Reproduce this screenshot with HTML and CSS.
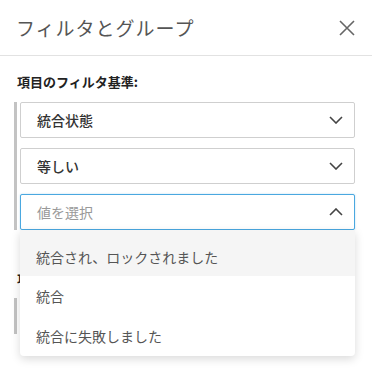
FILE: index.html
```html
<!DOCTYPE html>
<html lang="ja">
<head>
    <meta charset="UTF-8">
    <meta name="viewport" content="width=device-width, initial-scale=1.0">
    <title>フィルタとグループ</title>
    <link rel="stylesheet" href="styles.css">
</head>
<body>
    <div class="panel">
        <div class="panel-header">
            <h1>フィルタとグループ</h1>
            <button class="close-button" aria-label="閉じる">
                <svg width="16" height="16" viewBox="0 0 16 16">
                    <path d="M1 1L15 15M15 1L1 15" stroke="#666" stroke-width="1.6" fill="none"/>
                </svg>
            </button>
        </div>

        <div class="panel-body">
            <div class="section-label">項目のフィルタ基準:</div>
            <div class="filter-group">
                <div class="select">
                    <span class="select-value">統合状態</span>
                    <svg class="chevron" width="14" height="8" viewBox="0 0 14 8"><path d="M1 1L7 7L13 1" stroke="#444" stroke-width="1.6" fill="none"/></svg>
                </div>
                <div class="select">
                    <span class="select-value">等しい</span>
                    <svg class="chevron" width="14" height="8" viewBox="0 0 14 8"><path d="M1 1L7 7L13 1" stroke="#444" stroke-width="1.6" fill="none"/></svg>
                </div>
                <div class="select-wrap">
                    <div class="select open">
                        <span class="select-placeholder">値を選択</span>
                        <svg class="chevron" width="14" height="8" viewBox="0 0 14 8"><path d="M1 7L7 1L13 7" stroke="#444" stroke-width="1.6" fill="none"/></svg>
                    </div>
                    <ul class="dropdown">
                        <li class="active">統合され、ロックされました</li>
                        <li>統合</li>
                        <li>統合に失敗しました</li>
                    </ul>
                </div>
            </div>

            <div class="section-label second">項目のグループ化:</div>
            <div class="filter-group">
                <div class="select">
                    <span class="select-value">なし</span>
                    <svg class="chevron" width="14" height="8" viewBox="0 0 14 8"><path d="M1 1L7 7L13 1" stroke="#444" stroke-width="1.6" fill="none"/></svg>
                </div>
            </div>
        </div>
    </div>
</body>
</html>
```

FILE: styles.css
```css
* {
    margin: 0;
    padding: 0;
    box-sizing: border-box;
}

body {
    font-family: "Noto Sans CJK JP", "Noto Sans", sans-serif;
    background: white;
    width: 372px;
    height: 368px;
    overflow: hidden;
}

.panel-header {
    height: 56px;
    padding: 0 16px;
    border-bottom: 1px solid #e2e2e2;
    display: flex;
    align-items: center;
    justify-content: space-between;
}

.panel-header h1 {
    font-size: 19px;
    font-weight: 400;
    color: #555;
    letter-spacing: 1px;
}

.close-button {
    background: none;
    border: none;
    width: 20px;
    height: 20px;
    display: flex;
    align-items: center;
    justify-content: center;
    margin-right: -1px;
}

.panel-body {
    padding: 17px 17px 0 14px;
}

.section-label {
    padding-left: 3px;
    font-size: 13px;
    font-weight: 700;
    color: #222;
    line-height: 18px;
    margin-bottom: 11px;
}

.section-label.second {
    margin-top: 40px;
    margin-bottom: 10px;
}

.filter-group {
    border-left: 3px solid #c3c3c3;
    padding-left: 3px;
    display: flex;
    flex-direction: column;
    gap: 10px;
}

.select {
    height: 36px;
    border: 1px solid #cfcfcf;
    border-radius: 2px;
    background: white;
    padding: 0 11px 0 16px;
    display: flex;
    align-items: center;
    justify-content: space-between;
    font-size: 14px;
}

.select-value {
    color: #333;
    font-weight: 500;
}

.select-placeholder {
    color: #999;
}

.select.open {
    border: 1.5px solid #4aa8e0;
    box-shadow: 0 0 2px rgba(74,168,224,0.4);
}

.select-wrap {
    position: relative;
}

.dropdown {
    position: absolute;
    top: 36px;
    left: 0;
    right: 0;
    list-style: none;
    background: white;
    border-radius: 0 0 4px 4px;
    box-shadow: 0 3px 10px rgba(0,0,0,0.15);
    z-index: 10;
}

.dropdown li {
    padding: 10px 16px;
    line-height: 20px;
    font-size: 14px;
    color: #555;
}

.dropdown li.active {
    background: #f5f5f5;
    padding-top: 17px;
    padding-bottom: 9px;
}
```
